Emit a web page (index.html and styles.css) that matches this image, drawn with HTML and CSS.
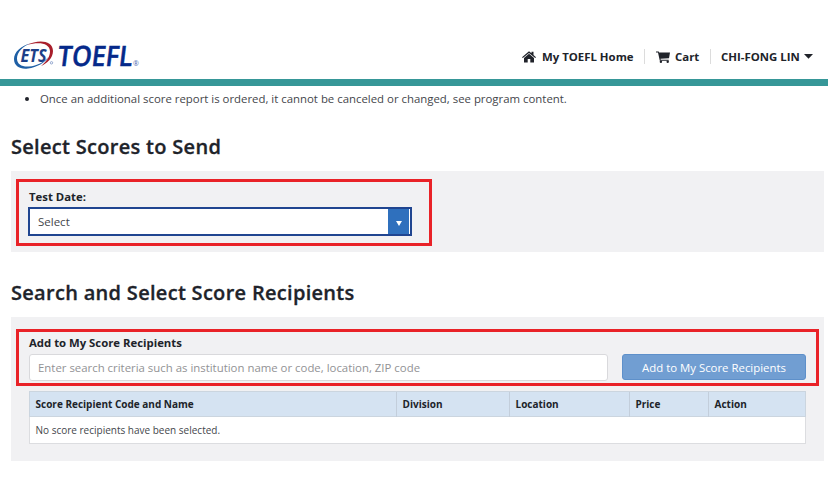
FILE: index.html
```html
<!DOCTYPE html>
<html lang="en">
<head>
<meta charset="utf-8">
<title>TOEFL Score Reports</title>
<link rel="stylesheet" href="styles.css">
</head>
<body>
<header class="header">
  <svg class="logo" width="130" height="34" viewBox="0 0 130 34" role="img" aria-label="ETS TOEFL">
    <path d="M18 3.2C8 5.500 1 12 1 19c0 7 6 10.500 14 9.500 9-1 17-6 21-12-5 5.500-12 9.500-20 10-7 .5-12-2-12-8C4 12 9.500 6.500 18 3.200Z" fill="#1e5fa5"/>
    <path d="M14 5C24-.5 40-.5 40 11c0 7-6 12.500-12 15 5-4 9-9 9-14.500C37 2.500 25 1.500 14 5Z" fill="#a81e2b"/>
    <text class="ets" x="7.500" y="21.500" textLength="26" lengthAdjust="spacingAndGlyphs">ETS</text>
    <circle cx="38.500" cy="22.800" r="1.200" fill="none" stroke="#6d87bd" stroke-width=".7"/>
    <text class="toefl" x="47" y="26.300" textLength="75" lengthAdjust="spacingAndGlyphs" transform="skewX(-7)">TOEFL</text>
    <text class="reg" x="120" y="26.300">®</text>
  </svg>
  <nav class="nav">
    <a class="item home"><svg width="14" height="12" viewBox="0 0 14 12"><path d="M0 6.200 7 .2l2.500 2.100V.8h2v3.300L14 6.200l-.8.900L7 1.900.8 7.100ZM2 7l5-4.200L12 7v4.500H8.300V8H5.700v3.500H2Z"/></svg><span>My TOEFL Home</span></a>
    <a class="item cart"><svg width="14" height="12" viewBox="0 0 14 12"><path d="M0 .5h2.700l.4 1H14L13 7.200 4.500 7.800l.2.900h8v1H3.800L2 1.600H0Z"/><circle cx="4.900" cy="10.700" r="1.200"/><circle cx="11.700" cy="10.700" r="1.200"/></svg><span>Cart</span></a>
    <a class="item user"><span>CHI-FONG LIN</span><svg width="9" height="5" viewBox="0 0 9 5"><path d="M0 0h9L4.500 4.800Z"/></svg></a>
  </nav>
</header>
<main>
  <ul class="notes"><li>Once an additional score report is ordered, it cannot be canceled or changed, see program content.</li></ul>
  <h2 class="title">Select Scores to Send</h2>
  <section class="panel dates">
    <div class="marked date-box">
      <div class="label">Test Date:</div>
      <div class="select"><span>Select</span><span class="arrow"><svg width="6" height="5" viewBox="0 0 6 5"><path d="M0 0h6L3 5Z"/></svg></span></div>
    </div>
  </section>
  <h2 class="title second">Search and Select Score Recipients</h2>
  <section class="panel recipients">
    <div class="marked search-box">
      <div class="label">Add to My Score Recipients</div>
      <div class="row">
        <input class="search" placeholder="Enter search criteria such as institution name or code, location, ZIP code">
        <button class="add">Add to My Score Recipients</button>
      </div>
    </div>
    <div class="table">
      <div class="thead"><span>Score Recipient Code and Name</span><span>Division</span><span>Location</span><span>Price</span><span>Action</span></div>
      <div class="empty">No score recipients have been selected.</div>
    </div>
  </section>
</main>
</body>
</html>
```
FILE: styles.css
```css
* { box-sizing: border-box; }
body { margin: 0; width: 828px; height: 500px; overflow: hidden; background: #fff; color: #20232a; font-family: "Open Sans", "Noto Sans", sans-serif; font-size: 12px; }
.header { height: 86px; border-bottom: 7px solid #369798; display: flex; justify-content: space-between; padding: 40px 15px 0 13px; }
.logo { flex: none; overflow: visible; }
.ets { font: italic 700 17px "Open Sans", sans-serif; fill: #1c3f88; }
.toefl { font: 600 28px "Open Sans", sans-serif; fill: #05298a; stroke: #05298a; stroke-width: .5px; }
.reg { font-size: 7px; fill: #4c68ad; }
.nav { display: flex; height: 15px; margin-top: 9px; }
.item { display: flex; align-items: center; font-size: 11.400px; line-height: 15px; font-weight: 700; white-space: nowrap; }
.item span { margin-top: -1px; }
.item svg { fill: #20232a; flex: none; }
.home { width: 122px; gap: 6px; }
.cart { width: 66px; border-left: 1px solid #dcdcdc; padding-left: 11px; gap: 5px; }
.user { width: 103px; border-left: 1px solid #dcdcdc; padding-left: 10px; justify-content: space-between; }
.notes { margin: 0; padding: 5px 0 0 40px; height: 47px; font-size: 11.400px; line-height: 15px; color: #44464b; white-space: nowrap; }
.notes li::marker { color: #20232a; }
.title { margin: 0 0 0 11px; height: 38px; font-size: 20px; line-height: 27px; font-weight: 600; letter-spacing: .3px; white-space: nowrap; -webkit-text-stroke: .3px #20232a; }
.panel { margin-left: 11px; width: 813px; background: #f1f1f3; }
.dates { height: 81px; padding: 8px 5px; }
.marked { border: 3px solid #e92228; }
.date-box { width: 416px; height: 67px; padding: 7px 17px 0 9px; }
.label { margin-left: 1px; font-size: 11.350px; line-height: 16px; font-weight: 700; }
.select { display: flex; justify-content: space-between; width: 384px; height: 29px; margin-top: 2px; padding: 0 1px 0 8px; border: 2px solid #204590; background: #fff; font-size: 11.500px; line-height: 26px; color: #44464b; }
.arrow { width: 21px; display: flex; align-items: center; justify-content: center; background: #2f70bd; padding-top: 3px; }
.arrow svg { fill: #fff; }
.second { margin-top: 27px; }
.recipients { height: 144px; padding: 12px 5px; }
.search-box { width: 803px; height: 57px; padding: 3px 10px 0 10px; }
.search-box .label { margin-left: 0; height: 16px; }
.row { display: flex; gap: 14px; margin-top: 3px; }
.search { width: 579px; height: 27px; padding: 0 8px; border: 1px solid #d9d9dc; border-radius: 3px; font: 11.400px "Open Sans", sans-serif; }
.search::placeholder { color: #929295; }
.add { width: 184px; height: 26px; padding: 0; border: 1px solid #5e90ca; border-radius: 3px; background: #719ed2; color: #fff; font: 11.400px "Open Sans", sans-serif; }
.table { width: 777px; height: 53px; margin: 5px 0 0 13px; border: 1px solid #dcdde0; background: #fff; font-size: 10px; }
.thead { display: grid; grid-template-columns: 366px 113px 120px 79px 1fr; height: 26px; margin: -1px -1px 0 -1px; border: 1px solid #cbd5df; background: #d5e3f2; line-height: 25px; font-weight: 700; }
.thead span { padding-left: 5.500px; border-left: 1px solid #c3cedb; }
.thead span:first-child { border-left: 0; }
.empty { padding-left: 5.500px; line-height: 26px; color: #44464b; }
```
